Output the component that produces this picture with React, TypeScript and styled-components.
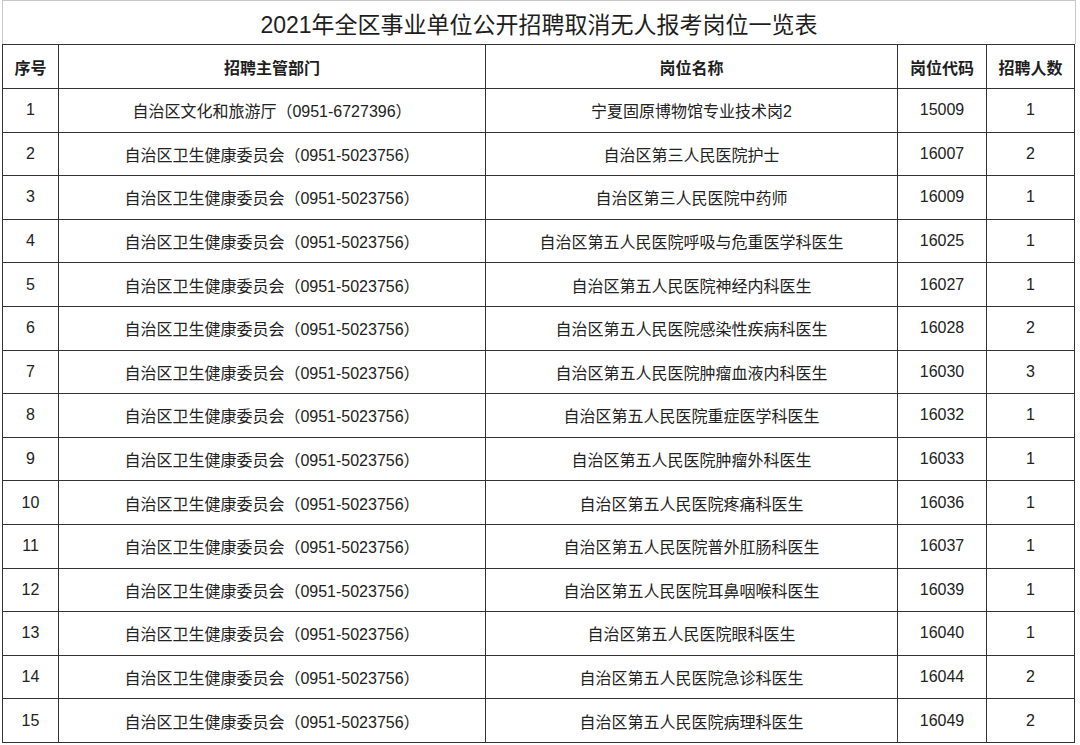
import styled, { createGlobalStyle } from "styled-components";

const GlobalStyle = createGlobalStyle`
  html, body {
    margin: 0;
    padding: 0;
    background: #fff;
  }
  body {
    font-family: "Liberation Sans", "Noto Sans CJK SC", sans-serif;
    color: #222;
  }
`;

const Page = styled.div`
  width: 1080px;
  height: 745px;
  overflow: hidden;
  padding-left: 2px;
  box-sizing: border-box;
`;

const Title = styled.div`
  width: 1074px;
  height: 44px;
  box-sizing: border-box;
  border: 1px solid #c8c8c8;
  border-bottom: none;
  display: flex;
  align-items: center;
  justify-content: center;
  font-size: 23px;
  color: #1e1e1e;
`;

const Table = styled.table`
  border-collapse: collapse;
  table-layout: fixed;
  width: 1072px;
`;

const HeadCell = styled.th`
  border: 1px solid #333;
  height: 43px;
  padding: 0;
  font-size: 16px;
  font-weight: 700;
  text-align: center;
  vertical-align: middle;
  color: #1e1e1e;
`;

const Cell = styled.td`
  border: 1px solid #333;
  height: 42.6px;
  padding: 0;
  font-size: 16px;
  text-align: center;
  vertical-align: middle;
  color: #222;
  white-space: nowrap;
`;

type Row = {
  dept: string;
  post: string;
  code: string;
  count: number;
};

const HEALTH = "自治区卫生健康委员会（0951-5023756）";

const rows: Row[] = [
  { dept: "自治区文化和旅游厅（0951-6727396）", post: "宁夏固原博物馆专业技术岗2", code: "15009", count: 1 },
  { dept: HEALTH, post: "自治区第三人民医院护士", code: "16007", count: 2 },
  { dept: HEALTH, post: "自治区第三人民医院中药师", code: "16009", count: 1 },
  { dept: HEALTH, post: "自治区第五人民医院呼吸与危重医学科医生", code: "16025", count: 1 },
  { dept: HEALTH, post: "自治区第五人民医院神经内科医生", code: "16027", count: 1 },
  { dept: HEALTH, post: "自治区第五人民医院感染性疾病科医生", code: "16028", count: 2 },
  { dept: HEALTH, post: "自治区第五人民医院肿瘤血液内科医生", code: "16030", count: 3 },
  { dept: HEALTH, post: "自治区第五人民医院重症医学科医生", code: "16032", count: 1 },
  { dept: HEALTH, post: "自治区第五人民医院肿瘤外科医生", code: "16033", count: 1 },
  { dept: HEALTH, post: "自治区第五人民医院疼痛科医生", code: "16036", count: 1 },
  { dept: HEALTH, post: "自治区第五人民医院普外肛肠科医生", code: "16037", count: 1 },
  { dept: HEALTH, post: "自治区第五人民医院耳鼻咽喉科医生", code: "16039", count: 1 },
  { dept: HEALTH, post: "自治区第五人民医院眼科医生", code: "16040", count: 1 },
  { dept: HEALTH, post: "自治区第五人民医院急诊科医生", code: "16044", count: 2 },
  { dept: HEALTH, post: "自治区第五人民医院病理科医生", code: "16049", count: 2 },
];

const App = () => {
  return (
    <Page>
      <GlobalStyle />
      <Title>2021年全区事业单位公开招聘取消无人报考岗位一览表</Title>
      <Table>
        <colgroup>
          <col style={{ width: 56 }} />
          <col style={{ width: 427 }} />
          <col style={{ width: 412 }} />
          <col style={{ width: 89 }} />
          <col style={{ width: 88 }} />
        </colgroup>
        <thead>
          <tr>
            <HeadCell>序号</HeadCell>
            <HeadCell>招聘主管部门</HeadCell>
            <HeadCell>岗位名称</HeadCell>
            <HeadCell>岗位代码</HeadCell>
            <HeadCell>招聘人数</HeadCell>
          </tr>
        </thead>
        <tbody>
          {rows.map((r, i) => (
            <tr key={r.code}>
              <Cell>{i + 1}</Cell>
              <Cell>{r.dept}</Cell>
              <Cell>{r.post}</Cell>
              <Cell>{r.code}</Cell>
              <Cell>{r.count}</Cell>
            </tr>
          ))}
        </tbody>
      </Table>
    </Page>
  );
};

export default App;
